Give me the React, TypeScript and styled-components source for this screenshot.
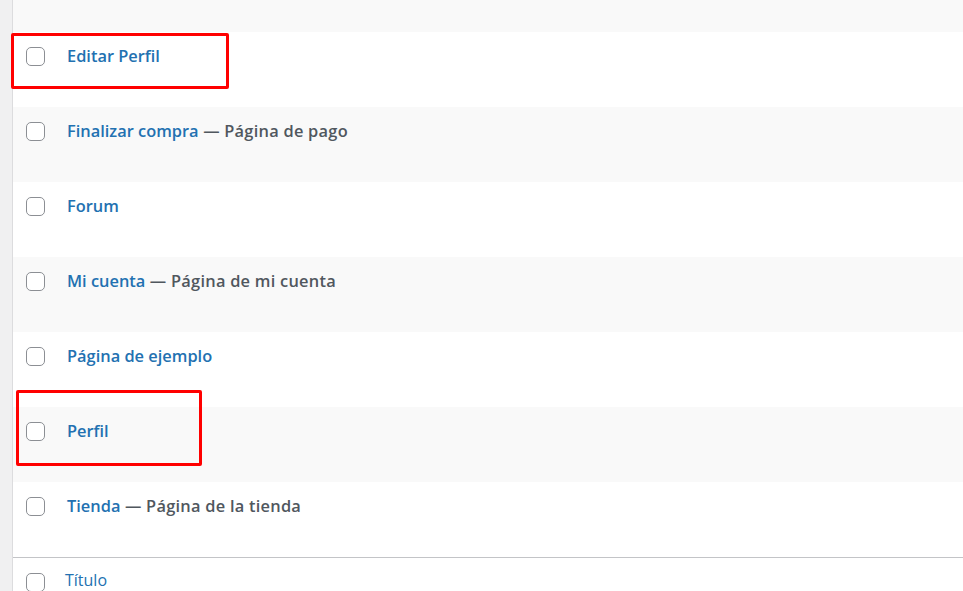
import styled, { createGlobalStyle } from 'styled-components';

interface PageRow {
  title: string;
  state?: string;
}

const rows: PageRow[] = [
  { title: 'Editar Perfil' },
  { title: 'Finalizar compra', state: 'Página de pago' },
  { title: 'Forum' },
  { title: 'Mi cuenta', state: 'Página de mi cuenta' },
  { title: 'Página de ejemplo' },
  { title: 'Perfil' },
  { title: 'Tienda', state: 'Página de la tienda' },
];

const App = () => {
  return (
    <>
      <GlobalStyle />
      <Page>
        <SideStrip />
        <Table>
          <TopRow $striped />
          {rows.map((row, i) => (
            <Row key={row.title} $striped={i % 2 === 1}>
              <Check />
              <TitleCell>
                <TitleLink>{row.title}</TitleLink>
                {row.state && <PostState> — {row.state}</PostState>}
              </TitleCell>
            </Row>
          ))}
          <FootRow>
            <Check />
            <FootTitle>Título</FootTitle>
          </FootRow>
        </Table>
        <Highlight $top={33} $left={11} $width={218} $height={56} />
        <Highlight $top={390} $left={16} $width={186} $height={76} />
      </Page>
    </>
  );
};

const GlobalStyle = createGlobalStyle`
  html, body {
    margin: 0;
    padding: 0;
    background: #fff;
    overflow: hidden;
  }
  body {
    font-family: 'Open Sans', 'Noto Sans', sans-serif;
  }
`;

const Page = styled.div`
  position: relative;
  display: flex;
  width: 963px;
  height: 591px;
  overflow: hidden;
`;

const SideStrip = styled.div`
  width: 12px;
  flex-shrink: 0;
  background: #f0f0f1;
  border-right: 1px solid #dcdcde;
`;

const Table = styled.div`
  flex: 1;
  display: flex;
  flex-direction: column;
`;

const TopRow = styled.div<{ $striped?: boolean }>`
  height: 32px;
  flex-shrink: 0;
  background: ${(p) => (p.$striped ? '#f9f9f9' : '#fff')};
`;

const Row = styled.div<{ $striped?: boolean }>`
  display: flex;
  align-items: flex-start;
  height: 75px;
  flex-shrink: 0;
  box-sizing: border-box;
  padding: 15px 0 0 13px;
  background: ${(p) => (p.$striped ? '#f9f9f9' : '#fff')};
`;

const Check = styled.span`
  width: 19px;
  height: 19px;
  flex-shrink: 0;
  box-sizing: border-box;
  border: 1.4px solid #8c8f94;
  border-radius: 5px;
  background: #fff;
`;

const TitleCell = styled.div`
  margin-left: 22px;
  margin-top: -3px;
  font-size: 16.4px;
  line-height: 24px;
  font-weight: 600;
  color: #50575e;
`;

const TitleLink = styled.span`
  color: #2271b1;
`;

const PostState = styled.span`
  color: #50575e;
  letter-spacing: 0.25px;
`;

const FootRow = styled.div`
  display: flex;
  align-items: flex-start;
  flex: 1;
  box-sizing: border-box;
  padding: 15px 0 0 13px;
  border-top: 1px solid #c3c4c7;
  background: #fff;
`;

const FootTitle = styled.span`
  margin-left: 20px;
  margin-top: -4px;
  font-size: 16px;
  line-height: 22px;
  color: #2271b1;
`;

const Highlight = styled.div<{ $top: number; $left: number; $width: number; $height: number }>`
  position: absolute;
  top: ${(p) => p.$top}px;
  left: ${(p) => p.$left}px;
  width: ${(p) => p.$width}px;
  height: ${(p) => p.$height}px;
  box-sizing: border-box;
  border: 3px solid #ff0000;
  border-radius: 2px;
  pointer-events: none;
`;

export default App;
